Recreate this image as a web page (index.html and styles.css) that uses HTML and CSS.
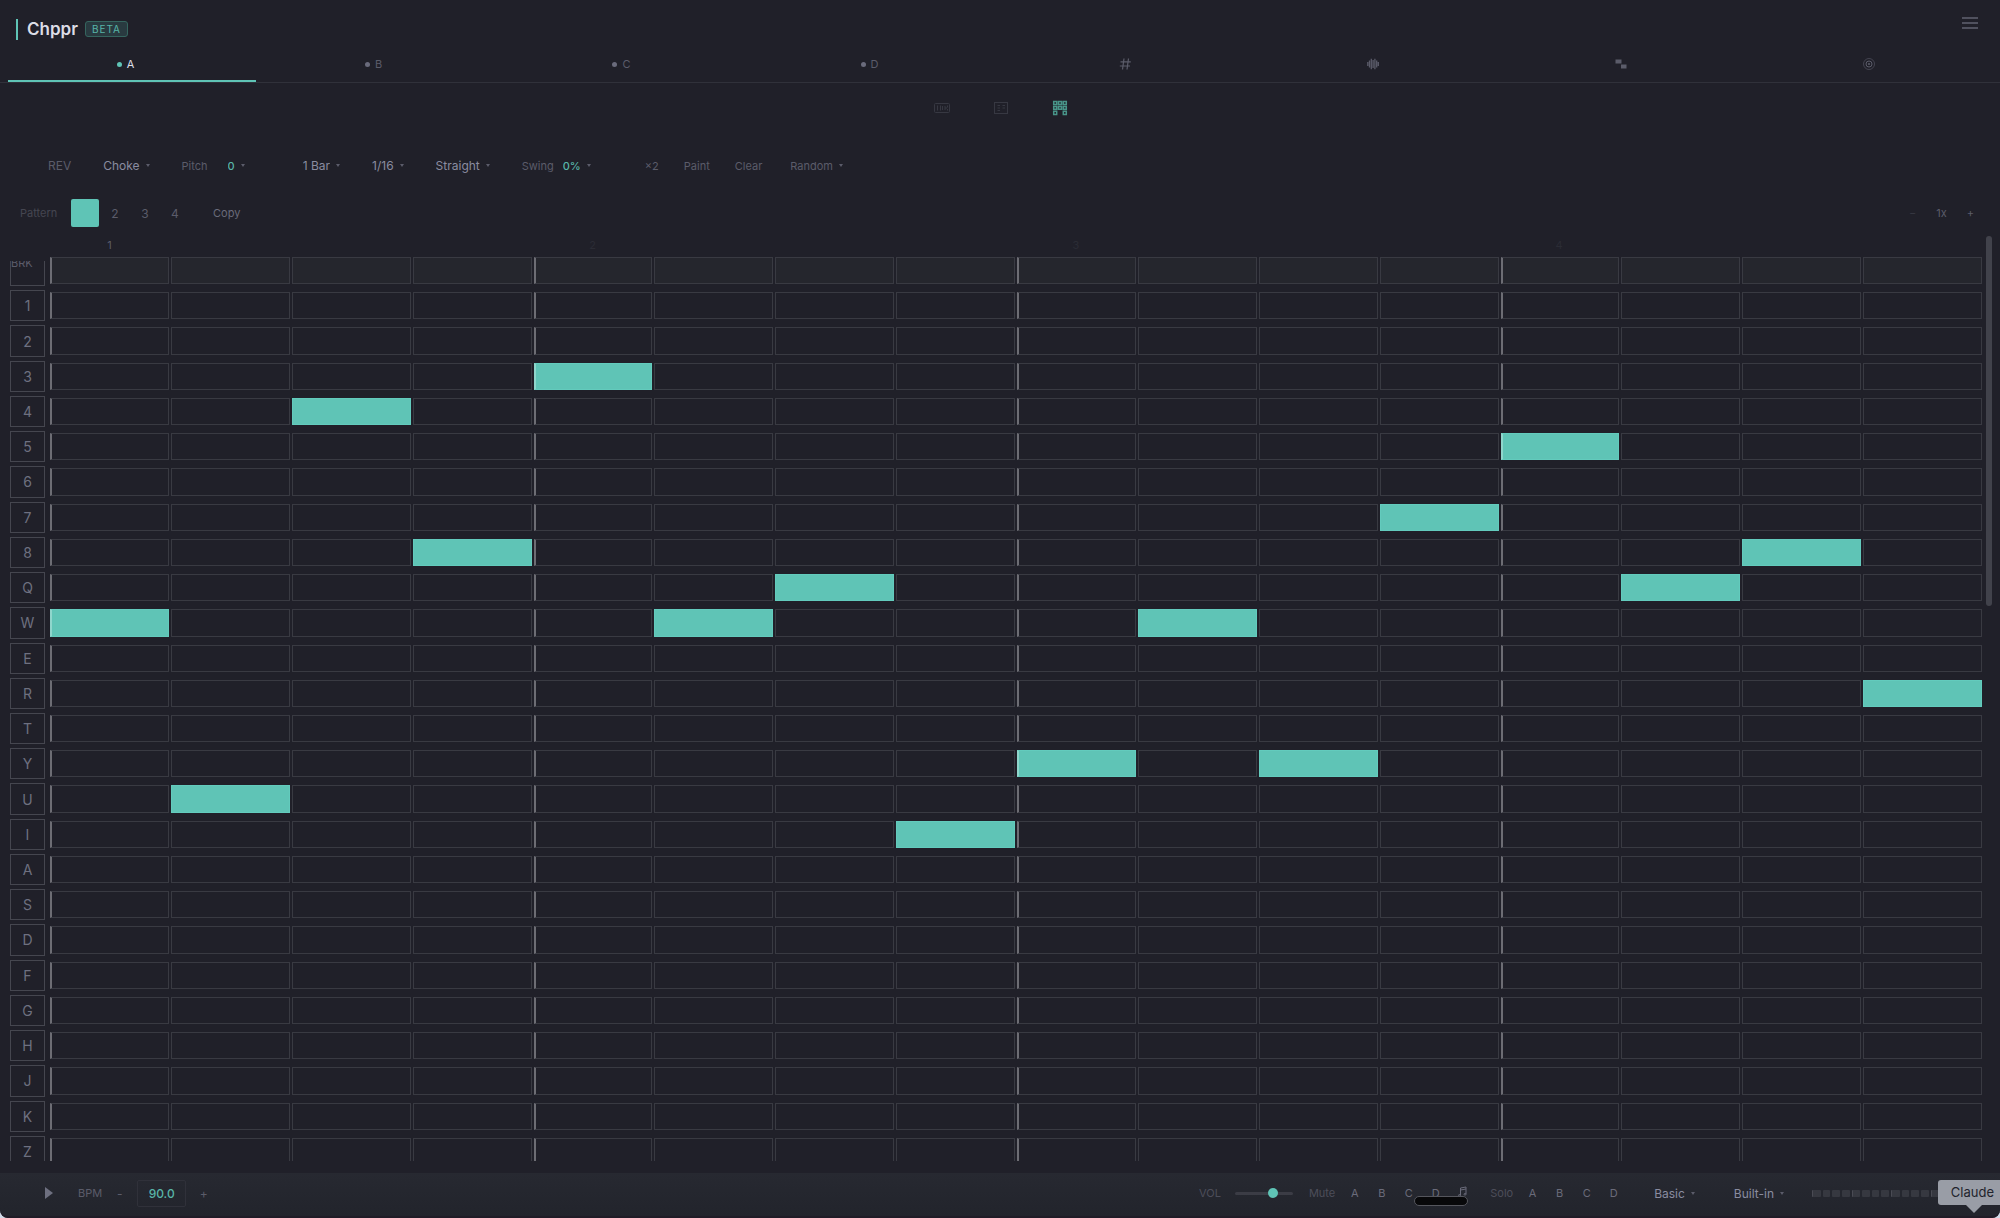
FILE: index.html
```html
<!DOCTYPE html>
<html lang="en">
<head>
    <meta charset="UTF-8">
    <meta name="viewport" content="width=device-width, initial-scale=1.0">
    <title>Chppr</title>
    <link rel="stylesheet" href="styles.css">
</head>
<body>
    <header class="header">
        <h1 class="brand">Chppr</h1>
        <span class="badge">BETA</span>
        <button class="menu-btn" aria-label="Menu"><span></span><span></span><span></span></button>
    </header>

    <!-- Tracks -->
    <nav class="tabs">
        <button class="tab track active"><i class="dot"></i>A</button>
        <button class="tab track"><i class="dot"></i>B</button>
        <button class="tab track"><i class="dot"></i>C</button>
        <button class="tab track"><i class="dot"></i>D</button>
        <button class="tab" aria-label="Grid">
            <svg width="12" height="12" viewBox="0 0 12 12" fill="none" stroke="currentColor" stroke-width="1.200"><path d="M5 .5L3.500 11.500M9.500 .5L8 11.500M1.500 3.800H11.800M.8 8H11"/></svg>
        </button>
        <button class="tab" aria-label="Waveform">
            <svg width="12" height="12" viewBox="0 0 12 12" fill="none" stroke="currentColor" stroke-width="1.300"><path d="M.8 4V8M2.500 2.500V9.500M4.300 .8V11.200M6.100 2V10M7.900 .8V11.200M9.700 2.500V9.500M11.300 4V8"/></svg>
        </button>
        <button class="tab" aria-label="Arrange">
            <svg width="12" height="12" viewBox="0 0 12 12" fill="currentColor"><path d="M.5 1.500H6.500V5.500H.5zM6 6.500H11.500V10.500H6z"/></svg>
        </button>
        <button class="tab" aria-label="Settings">
            <svg width="12" height="12" viewBox="0 0 12 12" fill="none" stroke="currentColor"><circle cx="6" cy="6" r="5.500" opacity=".6"/><circle cx="6" cy="6" r="3"/><circle cx="6" cy="6" r=".7"/></svg>
        </button>
    </nav>

    <!-- View switch -->
    <div class="views">
        <button class="view" aria-label="Keys">
            <svg width="16" height="16" viewBox="0 0 16 16" fill="none" stroke="currentColor"><rect x=".5" y="3.500" width="15" height="9" rx="1"/><path d="M3.500 5.500V10.500M6.500 5.500V10.500M8.500 6V10M11 6V10M13.500 5.500V7.500M13.500 9V10.500M11 8H13"/></svg>
        </button>
        <button class="view" aria-label="Pads">
            <svg width="16" height="16" viewBox="0 0 16 16" fill="none" stroke="currentColor"><rect x="1.500" y="2.500" width="13" height="11"/><path d="M4.500 5.500H7M4.500 8H7M4.500 10.500H7M9.500 5.500H12M9.500 8H12"/></svg>
        </button>
        <button class="view active" aria-label="Sequencer">
            <svg width="16" height="16" viewBox="0 0 16 16" fill="none" stroke="currentColor" stroke-width="1.500"><path d="M1.700 1.600H4.700V4.400H1.700zM6.500 1.600H9.500V4.400H6.500zM11.300 1.600H14.300V4.400H11.300zM1.700 6.400H4.700V9.200H1.700zM6.500 6.400H9.500V9.200H6.500zM11.300 6.400H14.300V9.200H11.300zM1.700 11.200H4.700V14.600H1.700zM11.300 11.200H14.300V14.600H11.300z"/></svg>
        </button>
    </div>

    <div class="toolbar">
        <div class="group">
            <button class="tool rev">REV</button>
            <span class="pick"><select aria-label="Mode"><option>Choke</option><option>Poly</option></select></span>
            <span class="field pitch"><label for="pitch">Pitch</label><span class="pick value"><select id="pitch"><option>0</option><option>1</option></select></span></span>
        </div>
        <div class="group timing">
            <span class="pick"><select aria-label="Length"><option>1 Bar</option><option>2 Bars</option></select></span>
            <span class="pick"><select aria-label="Step"><option>1/16</option><option>1/8</option></select></span>
            <span class="pick"><select aria-label="Feel"><option>Straight</option><option>Triplet</option></select></span>
            <span class="field"><label for="swing">Swing</label><span class="pick value"><select id="swing"><option>0%</option><option>50%</option></select></span></span>
        </div>
        <div class="group actions">
            <button class="tool">×2</button>
            <button class="tool">Paint</button>
            <button class="tool">Clear</button>
            <button class="tool pick">Random</button>
        </div>
    </div>

    <div class="patterns">
        <span class="caption">Pattern</span>
        <button class="pattern active" aria-label="1"></button>
        <button class="pattern">2</button>
        <button class="pattern">3</button>
        <button class="pattern">4</button>
        <button class="tool copy">Copy</button>
        <div class="zoom">
            <button class="tool off">−</button>
            <span>1x</span>
            <button class="tool">+</button>
        </div>
    </div>

    <main class="sequencer">
        <div class="lanes">
            <div class="ruler"><span class="current">1</span><span>2</span><span>3</span><span>4</span></div>
            <div class="viewport">
                <div class="rows" id="rows"></div>
            </div>
        </div>
        <div class="scrollbar"><div class="thumb"></div></div>
    </main>

    <footer class="transport">
        <button class="play" aria-label="Play"><svg width="8" height="12" viewBox="0 0 8 12" fill="currentColor"><path d="M0 0L8 6L0 12z"/></svg></button>
        <label class="bpm-label" for="bpm">BPM</label>
        <button class="step-btn">-</button>
        <input class="bpm" id="bpm" type="text" value="90.0">
        <button class="step-btn">+</button>

        <div class="mix">
            <label for="vol">VOL</label>
            <input class="vol" id="vol" type="range" min="0" max="100" value="70">
            <span class="mix-name">Mute</span>
            <div class="mix-keys">
                <button>A</button><button>B</button><button>C</button><button>D</button>
                <button aria-label="Music"><svg width="9" height="11" viewBox="0 0 9 11" fill="none" stroke="currentColor"><path d="M2.500 9V2L8 1V8M2.500 4L8 3"/><ellipse cx="1.600" cy="9.300" rx="1" ry=".8"/><ellipse cx="7" cy="8.300" rx="1" ry=".8"/></svg></button>
            </div>
            <span class="mix-name">Solo</span>
            <div class="mix-keys">
                <button>A</button><button>B</button><button>C</button><button>D</button>
            </div>
            <span class="pick kit"><select aria-label="Mode"><option>Basic</option><option>Advanced</option></select></span>
            <span class="pick"><select aria-label="Output"><option>Built-in</option><option>External</option></select></span>
            <div class="steps" id="steps"></div>
        </div>
    </footer>

    <div class="pill"></div>
    <div class="tooltip">Claude</div>

    <script src="script.js"></script>
</body>
</html>
```
FILE: styles.css
```css
* {
    box-sizing: border-box;
}
html {
    background: #cfd8e6;
}
body {
    font-family: 'Inter', 'Liberation Sans', sans-serif;
    font-size: 12px;
    background: #202029;
    color: #5b5c6a;
    margin: 0;
    display: flex;
    flex-direction: column;
    height: 100vh;
    overflow: hidden;
    position: relative;
    border-radius: 0 0 8px 8px;
}
button, select, input {
    font: inherit;
    color: inherit;
    background: none;
    border: none;
    padding: 0;
    margin: 0;
    cursor: pointer;
}

/* Header */
.header {
    display: flex;
    align-items: center;
    height: 46px;
    padding: 12px 22px 0 16px;
}
.brand {
    margin: 0;
    padding-left: 9px;
    border-left: 2px solid #5fc4b6;
    font-size: 17px;
    line-height: 21px;
    font-weight: 600;
    color: #dcdde6;
}
.badge {
    margin-left: 7px;
    padding: 0 6px;
    border: 1px solid #35655f;
    border-radius: 3px;
    background: #293a40;
    color: #58b5a8;
    font-size: 10px;
    line-height: 14px;
    letter-spacing: 1px;
}
.menu-btn {
    display: flex;
    flex-direction: column;
    gap: 3px;
    width: 16px;
    margin: 0 0 12px auto;
}
.menu-btn span {
    height: 2px;
    background: #50515e;
}

/* Tabs */
.tabs {
    display: grid;
    grid-template-columns: repeat(8, 1fr);
    height: 37px;
    padding: 0 8px;
    border-bottom: 1px solid #30313a;
}
.tab {
    display: flex;
    align-items: center;
    justify-content: center;
    gap: 5px;
    padding: 2px 0 0 2px;
    font-size: 11px;
    border-bottom: 2px solid transparent;
}
.tab.track {
    padding-right: 15px;
}
.tab.active {
    color: #dcdde6;
    border-color: #5fc4b6;
}
.dot {
    width: 5px;
    height: 5px;
    border-radius: 50%;
    background: #6a6b7c;
}
.tab.active .dot {
    background: #5fc4b6;
}

/* View switch */
.views {
    display: flex;
    align-items: center;
    justify-content: center;
    gap: 43px;
    height: 51px;
    padding: 0 0 1px 2px;
}
.view {
    display: flex;
    color: #373842;
}
.view.active {
    color: #489589;
}

/* Toolbar */
.toolbar {
    display: flex;
    align-items: center;
    height: 63px;
    padding-left: 48px;
}
.group {
    display: flex;
    align-items: center;
    gap: 32px;
}
.timing {
    margin-left: 58px;
}
.tool {
    font-size: 11px;
}
.rev {
    font-size: 12px;
}
.field {
    display: flex;
    align-items: center;
    gap: 9px;
    font-size: 11px;
}
.pitch {
    gap: 20px;
}
.pick {
    display: flex;
    align-items: center;
    gap: 6px;
    color: #8a8ca0;
}
.pick::after {
    content: '';
    border: 2px solid transparent;
    border-top: 3px solid #5b5c6a;
    border-bottom: none;
}
.pick select {
    appearance: none;
    field-sizing: content;
    outline: none;
}
.value {
    color: #58b5a8;
    font-weight: 500;
}
.actions {
    gap: 25px;
    margin-left: 54px;
}
.tool.pick {
    color: inherit;
    margin-left: 3px;
}

/* Patterns */
.patterns {
    display: flex;
    align-items: center;
    height: 32px;
    padding: 0 26px 0 20px;
}
.caption {
    width: 51px;
    font-size: 11px;
    color: #454651;
}
.pattern {
    width: 28px;
    height: 28px;
    margin-right: 2px;
    border-radius: 2px;
}
.pattern.active {
    background: #5fc4b6;
}
.copy {
    margin-left: 22px;
    color: #6a6b7a;
}
.zoom {
    display: flex;
    align-items: center;
    gap: 20px;
    margin-left: auto;
    font-size: 11px;
}
.zoom .off {
    color: #353640;
}

/* Sequencer */
.sequencer {
    flex: 1;
    min-height: 0;
    display: flex;
    padding: 7px 8px 12px 10px;
}
.lanes {
    flex: 1;
    display: flex;
    flex-direction: column;
    min-width: 0;
}
.ruler {
    display: grid;
    grid-template-columns: repeat(4, 1fr);
    height: 17px;
    padding-left: 39px;
    font-size: 11px;
    line-height: 19px;
    color: #2b2c35;
}
.ruler span {
    width: 25%;
    text-align: center;
}
.ruler .current {
    color: #5b5c6a;
}
.viewport {
    flex: 1;
    min-height: 0;
    overflow: hidden;
}
.rows {
    display: grid;
    grid-auto-rows: 1fr;
    height: calc(100% + 8px);
}
.row {
    display: grid;
    grid-template-columns: 38px repeat(16, 1fr);
    column-gap: 2px;
    padding: 2px 0;
}
.key {
    display: flex;
    align-items: center;
    justify-content: center;
    margin-right: 3px;
    border: 1px solid #45464f;
    font-size: 14px;
    color: #6e7080;
}
.cell {
    margin: 2px 0;
    border: 1px solid #393a42;
}
.cell.beat {
    border-left: 2px solid #6d6d74;
}
.cell.on {
    background: #5fc4b6;
    border-color: #63cbbd;
}
.cell.on.beat {
    border-left-color: #8fd6cc;
}
.row.break .cell {
    background: #25262d;
}
/* The break key is tucked under the ruler */
.row.break .key {
    align-self: end;
    justify-content: flex-start;
    height: 25px;
    border-top: none;
    overflow: hidden;
    font-size: 11px;
    line-height: 5px;
    align-items: flex-start;
    color: #5b5c6a;
}
.scrollbar {
    width: 6px;
    margin-left: 4px;
}
.thumb {
    height: 40%;
    border-radius: 3px;
    background: #41424b;
}

/* Transport */
.transport {
    display: flex;
    align-items: center;
    height: 45px;
    padding: 0 32px 3px 45px;
    background: linear-gradient(#272931, #22242c);
    border-bottom: 2px solid #201c27;
    border-radius: 0 0 8px 8px;
    font-size: 11px;
}
.play {
    display: flex;
    color: #6e7080;
}
.bpm-label {
    margin-left: 25px;
}
.step-btn {
    width: 35px;
    font-size: 12px;
}
.bpm {
    width: 49px;
    height: 27px;
    border: 1px solid #30313a;
    border-radius: 2px;
    text-align: center;
    font-size: 12px;
    font-weight: 500;
    color: #58b5a8;
}
.mix {
    display: flex;
    align-items: center;
    margin-left: auto;
    color: #4d4e5a;
}
.vol {
    appearance: none;
    width: 58px;
    height: 10px;
    margin: 0 16px 0 14px;
}
.vol::-webkit-slider-runnable-track {
    height: 3px;
    border-radius: 2px;
    background: #3b3c45;
}
.vol::-webkit-slider-thumb {
    appearance: none;
    width: 10px;
    height: 10px;
    margin-top: -4px;
    border-radius: 50%;
    background: #5fc4b6;
}
.mix-keys {
    display: flex;
    margin: 0 14px 0 6px;
    color: #6a6b7a;
}
.mix-keys button {
    width: 27px;
}
.kit {
    margin: 0 39px 0 13px;
}
.mix .pick {
    font-size: 12px;
}
.steps {
    display: flex;
    gap: 2px;
    width: 156px;
    margin-left: 28px;
}
.steps span {
    flex: 1;
    height: 7px;
    border-radius: 1px;
    background: #363840;
}
.steps span:nth-child(4n + 1) {
    border-left: 1px solid #4a4b54;
}

/* Floating over the window */
.pill {
    position: absolute;
    right: 532px;
    bottom: 12px;
    width: 54px;
    height: 10px;
    border: 1px solid #55565d;
    border-radius: 5px;
    background: #08080a;
}
.tooltip {
    position: absolute;
    right: 0;
    bottom: 13px;
    padding: 0 6px 0 13px;
    border-radius: 3px 0 0 3px;
    background: #999da6;
    color: #22242c;
    font-size: 13px;
    line-height: 25px;
}
.tooltip::after {
    content: '';
    position: absolute;
    top: 100%;
    left: 28px;
    border: 8px solid transparent;
    border-top-color: #999da6;
    border-bottom: none;
}
```
FILE: script.js
```js
const keys = ["BRK", ..."12345678QWERTYUIASDFGHJKZ"];
const pattern = ["W", "U", "4", "8", "3", "W", "Q", "I", "Y", "W", "Y", "7", "5", "Q", "8", "R"];

const rows = document.getElementById("rows");
keys.forEach(key => {
    const row = document.createElement("div");
    row.className = key === "BRK" ? "row break" : "row";

    const label = document.createElement("button");
    label.className = "key";
    label.textContent = key;
    row.appendChild(label);

    pattern.forEach((note, step) => {
        const cell = document.createElement("button");
        cell.className = "cell";
        cell.setAttribute("aria-label", `${key} step ${step + 1}`);
        if (step % 4 === 0) cell.classList.add("beat");
        if (note === key) cell.classList.add("on");
        cell.addEventListener("click", () => cell.classList.toggle("on"));
        row.appendChild(cell);
    });
    rows.appendChild(row);
});

const steps = document.getElementById("steps");
for (let i = 0; i < 16; i++) {
    steps.appendChild(document.createElement("span"));
}
```
